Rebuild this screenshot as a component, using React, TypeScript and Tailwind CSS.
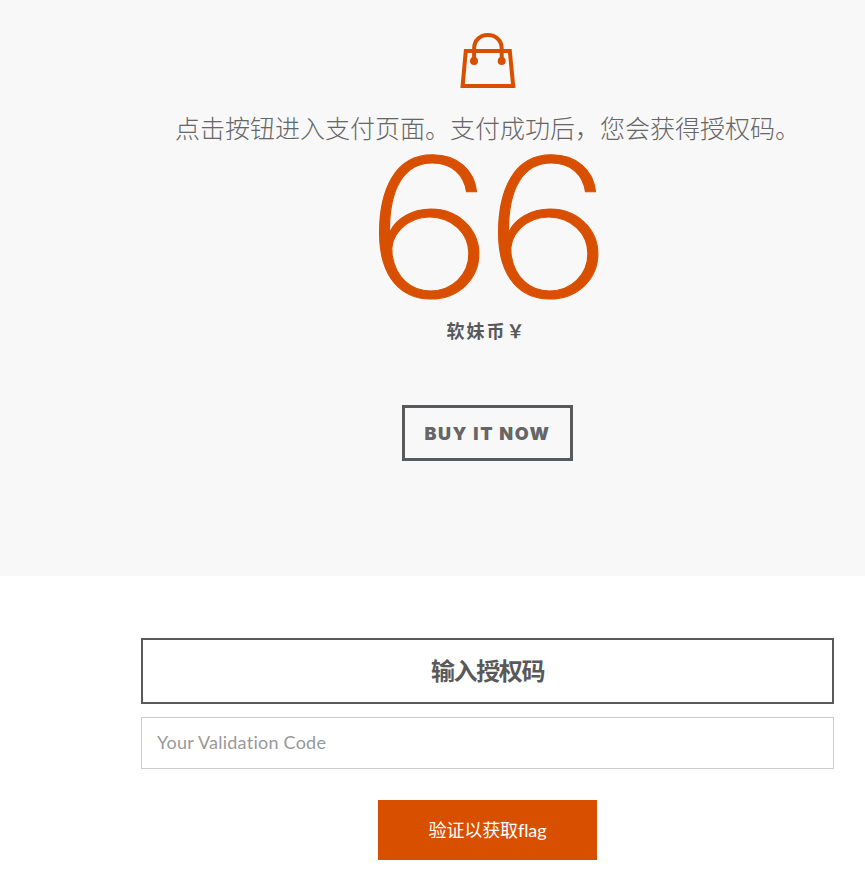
function BagIcon() {
  return (
    <svg
      className="mt-[33px] h-[56px] w-[56px] shrink-0"
      viewBox="0 0 56 56"
      fill="none"
      stroke="#d94f00"
      strokeWidth="4"
      aria-hidden="true"
    >
      <path d="M5.8 18h44l3.4 35H2.6z" />
      <path d="M14.1 28V15.5C14.1 7.5 20 2 27.9 2s13.8 5.5 13.8 13.5V28" />
      <circle cx="14" cy="28" r="4" fill="#d94f00" stroke="none" />
      <circle cx="41.7" cy="28" r="4" fill="#d94f00" stroke="none" />
    </svg>
  );
}

export default function App() {
  return (
    <main className="h-[883px] w-[865px] overflow-hidden bg-white font-['Lato','Noto_Sans_CJK_SC',sans-serif] text-[#58595b]">
      <section className="h-[576px] bg-[#f8f8f8] pl-[141px] pr-[31px]">
        <div className="flex flex-col items-center">
          <BagIcon />
          <h2 className="mt-[19px] h-[38px] whitespace-nowrap font-['Noto_Sans_CJK_SC',sans-serif] text-[25px] font-light leading-[38px] text-[#666]">
            点击按钮进入支付页面。支付成功后，您会获得授权码。
          </h2>
          <div className="mr-[8px] mt-[9px] h-[145px] scale-x-[1.15] whitespace-nowrap font-['Inter',sans-serif] text-[193px] font-extralight leading-[145px] tracking-[-9px] text-[#d94f00] [-webkit-text-stroke:1px_#d94f00]">
            66
          </div>
          <div className="mr-[2px] mt-[16px] h-[28px] whitespace-nowrap font-['Noto_Sans_CJK_SC',sans-serif] text-[18px] font-bold leading-[28px] tracking-[2px]">
            软妹币￥
          </div>
          <button className="mt-[61px] h-[56px] w-[171px] whitespace-nowrap border-[3px] border-[#58595b] font-['Inter',sans-serif] text-[18px] font-black leading-[52px] tracking-[1.6px] text-[#666]">
            BUY IT NOW
          </button>
        </div>
      </section>
      <section className="flex flex-col items-center pl-[141px] pr-[31px] pt-[62px]">
        <h3 className="h-[66px] w-full border-2 border-[#58595b] text-center font-['Noto_Sans_CJK_SC',sans-serif] text-[24px] font-bold leading-[60px] tracking-[-1.4px]">
          输入授权码
        </h3>
        <input
          className="mt-[13px] h-[52px] w-full border border-[#ccc] px-[15px] pb-[2px] text-[18px] tracking-[0.25px] outline-none placeholder:text-[#999]"
          placeholder="Your Validation Code"
        />
        <button className="mt-[31px] h-[60px] w-[219px] whitespace-nowrap bg-[#d94f00] text-[18px] leading-[60px] tracking-[-0.1px] text-white">
          验证以获取flag
        </button>
      </section>
    </main>
  );
}
